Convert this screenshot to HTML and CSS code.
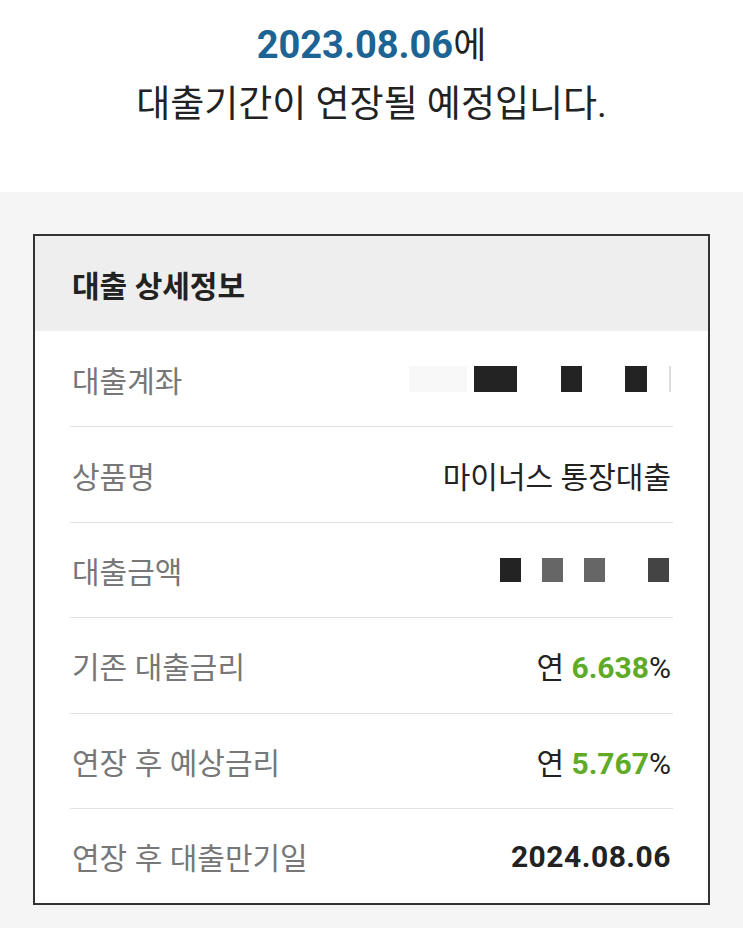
FILE: index.html
```html
<!DOCTYPE html>
<html lang="ko">
<head>
    <meta charset="UTF-8">
    <meta name="viewport" content="width=device-width, initial-scale=1.0">
    <title>대출기간 연장 안내</title>
    <link rel="stylesheet" href="styles.css">
</head>
<body>
    <!-- 연장 안내 문구 -->
    <section class="notice">
        <p class="notice-date"><span class="date">2023.08.06</span>에</p>
        <p class="notice-text">대출기간이 연장될 예정입니다.</p>
    </section>

    <!-- 대출 상세정보 카드 -->
    <main class="detail-area">
        <div class="detail-card">
            <div class="card-head">대출 상세정보</div>
            <ul class="rows">
                <li class="row">
                    <span class="label">대출계좌</span>
                    <span class="masked">
                        <i class="blk faint w58"></i>
                        <i class="blk dark w43 ml7"></i>
                        <i class="blk dark w21 ml44"></i>
                        <i class="blk dark w22 ml43"></i>
                        <i class="blk line ml22"></i>
                    </span>
                </li>
                <li class="row">
                    <span class="label">상품명</span>
                    <span class="value">마이너스 통장대출</span>
                </li>
                <li class="row">
                    <span class="label">대출금액</span>
                    <span class="masked small">
                        <i class="blk dark w21"></i>
                        <i class="blk mid w21 ml21"></i>
                        <i class="blk mid w21 ml21"></i>
                        <i class="blk dim w21 ml43"></i>
                    </span>
                </li>
                <li class="row">
                    <span class="label">기존 대출금리</span>
                    <span class="value">연 <b class="rate">6.638</b><span class="num">%</span></span>
                </li>
                <li class="row">
                    <span class="label">연장 후 예상금리</span>
                    <span class="value">연 <b class="rate">5.767</b><span class="num">%</span></span>
                </li>
                <li class="row">
                    <span class="label">연장 후 대출만기일</span>
                    <span class="value num strong">2024.08.06</span>
                </li>
            </ul>
        </div>
    </main>
</body>
</html>
```

FILE: styles.css
```css
body {
    margin: 0;
    padding: 0;
    font-family: Roboto, "Noto Sans CJK KR", sans-serif;
    color: #222;
    background-color: #fff;
}
p {
    margin: 0;
}

/* 상단 안내 */
.notice {
    height: 192px;
    box-sizing: border-box;
    padding-top: 15px;
    text-align: center;
}
.notice-date {
    height: 60px;
    line-height: 60px;
    font-size: 36px;
}
.notice-date .date {
    font-family: Roboto, sans-serif;
    font-weight: 700;
    font-size: 38px;
    color: #1d6394;
}
.notice-text {
    height: 60px;
    line-height: 60px;
    font-size: 37px;
    color: #222;
}

/* 회색 배경 영역 */
.detail-area {
    background-color: #f5f5f5;
    padding: 42px 0 25px 33px;
}
.detail-card {
    width: 677px;
    box-sizing: border-box;
    border: 2px solid #333;
    background: #fff;
}
.card-head {
    height: 95px;
    background: #eeeeee;
    padding-left: 37px;
    display: flex;
    align-items: center;
    font-size: 30px;
    font-weight: 700;
    color: #222;
}
.rows {
    list-style: none;
    margin: 0;
    padding: 0;
}
.row {
    height: 95.4px;
    box-sizing: border-box;
    margin: 0 35px;
    padding: 0 2px;
    display: flex;
    align-items: center;
    justify-content: space-between;
}
.row + .row {
    border-top: 1px solid #e2e2e2;
}
.label {
    font-size: 30px;
    color: #777;
}
.value {
    font-size: 30px;
    color: #222;
}
.num {
    font-family: Roboto, sans-serif;
    font-size: 30px;
}
.strong {
    font-weight: 700;
    letter-spacing: 0.5px;
}
.rate {
    font-family: Roboto, sans-serif;
    font-size: 30px;
    font-weight: 700;
    color: #5fab28;
}

/* 가려진 계좌/금액 */
.masked {
    display: flex;
    align-items: center;
}
.blk {
    display: block;
    height: 26px;
}
.masked.small .blk {
    height: 24px;
}
.masked.small {
    margin-right: 2px;
}
.faint { background: #f8f8f8; }
.dark { background: #232323; }
.mid { background: #666; }
.dim { background: #444; }
.line { width: 2px; background: #ddd; }
.w21 { width: 21px; }
.w22 { width: 22px; }
.w43 { width: 43px; }
.w58 { width: 58px; }
.ml7 { margin-left: 7px; }
.ml21 { margin-left: 21px; }
.ml22 { margin-left: 22px; }
.ml43 { margin-left: 43px; }
.ml44 { margin-left: 44px; }
```
